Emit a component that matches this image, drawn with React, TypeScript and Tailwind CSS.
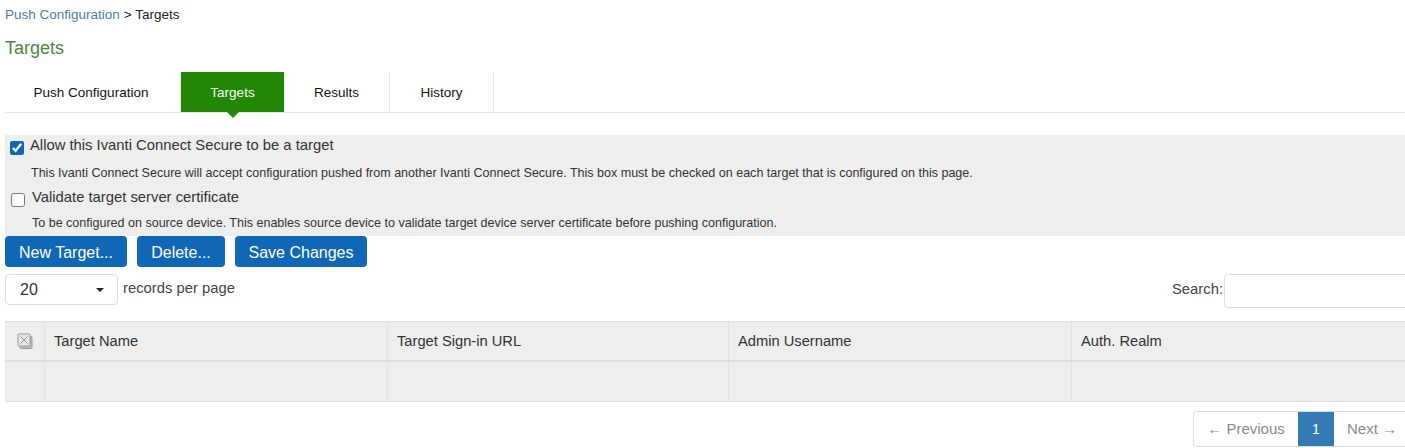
import { useState } from "react";

const tabs = [
  { label: "Push Configuration", width: "w-[176px] pr-[3px]", active: false },
  { label: "Targets", width: "w-[103px]", active: true },
  { label: "Results", width: "w-[106px]", active: false },
  { label: "History", width: "w-[104px]", active: false },
];

const columns = ["Target Name", "Target Sign-in URL", "Admin Username", "Auth. Realm"];

const gridCols = "grid grid-cols-[40px_343px_341px_343px_1fr]";

const SelectAllIcon = () => (
  <svg width="16" height="16" viewBox="0 0 16 16" fill="none">
    <rect x="3" y="3.5" width="12" height="12" rx="1" fill="#bdbdbd" stroke="#9a9a9a" />
    <rect x="1" y="1" width="12" height="12" rx="1" fill="#e6e6e6" stroke="#9a9a9a" />
    <path d="M3.5 3.5l7 7M10.5 3.5l-7 7" stroke="#9a9a9a" />
  </svg>
);

const App = () => {
  const [allow, setAllow] = useState(true);
  const [validate, setValidate] = useState(false);

  return (
    <div className="w-[1405px] h-[448px] overflow-hidden bg-white text-[13.5px] text-[#333] font-['Liberation_Sans',Arial,sans-serif]">
      {/* breadcrumb */}
      <div className="h-[29px] pl-[5px] pt-[1px] flex items-center">
        <span className="text-[#4a7fa8]">Push Configuration</span>
        <span className="ml-[4px] text-[#222]">&gt; Targets</span>
      </div>

      <h1 className="pl-[5px] h-[43px] pb-[5px] flex items-center text-[18px] text-[#4a8a3a]">Targets</h1>

      {/* tabs */}
      <div className="ml-[5px] h-[41px] flex border-b border-[#e5e5e5]">
        {tabs.map((tab) => (
          <div
            key={tab.label}
            className={
              tab.active
                ? `relative ${tab.width} h-[40px] pt-[2px] flex items-center justify-center bg-[#218704] text-white`
                : `${tab.width} h-[40px] pt-[2px] flex items-center justify-center text-[#111] border-r border-[#e8e8e8]`
            }
          >
            {tab.label}
            {tab.active && (
              <div className="absolute top-full left-1/2 -translate-x-1/2 border-x-[6px] border-t-[6px] border-x-transparent border-t-[#218704]" />
            )}
          </div>
        ))}
      </div>

      {/* options */}
      <div className="ml-[5px] mt-[22px] h-[101px] bg-[#eeeeee] text-[#333]">
        <div className="h-[26px] pl-[5px] flex items-center">
          <input
            type="checkbox"
            checked={allow}
            onChange={() => setAllow(!allow)}
            className="w-[14px] h-[14px] accent-[#0f67b5]"
          />
          <label className="ml-[6px] text-[14.8px] -mt-[6px]">Allow this Ivanti Connect Secure to be a target</label>
        </div>
        <p className="h-[26px] pl-[26px] pb-[2px] flex items-center text-[12.52px]">
          This Ivanti Connect Secure will accept configuration pushed from another Ivanti Connect Secure. This box must
          be checked on each target that is configured on this page.
        </p>
        <div className="h-[25px] pl-[6px] flex items-center">
          <input
            type="checkbox"
            checked={validate}
            onChange={() => setValidate(!validate)}
            className="w-[14px] h-[14px] mt-[1px] accent-[#0f67b5]"
          />
          <label className="ml-[7px] text-[14.8px] -mt-[4px]">Validate target server certificate</label>
        </div>
        <p className="h-[24px] pl-[27px] pb-[2px] flex items-center text-[12.52px]">
          To be configured on source device. This enables source device to validate target device server certificate
          before pushing configuration.
        </p>
      </div>

      {/* buttons */}
      <div className="ml-[5px] h-[31px] flex gap-[10px] text-[16px] text-white">
        <button className="w-[122px] pt-[2px] rounded-[4px] bg-[#0f67b5]">New Target...</button>
        <button className="w-[88px] pt-[2px] rounded-[4px] bg-[#0f67b5]">Delete...</button>
        <button className="w-[132px] pt-[2px] rounded-[4px] bg-[#0f67b5]">Save Changes</button>
      </div>

      {/* length + search */}
      <div className="mt-[7px] h-[31px] ml-[5px] flex items-center justify-between">
        <div className="flex items-center">
          <div className="w-[113px] h-[31px] pl-[14px] pr-[13px] flex items-center justify-between border border-[#ddd] rounded-[4px] text-[16px] text-[#333]">
            20
            <span className="border-x-[4px] border-t-[4px] border-x-transparent border-t-[#222]" />
          </div>
          <span className="ml-[5px] -mt-[3px] text-[14.8px] text-[#444]">records per page</span>
        </div>
        <div className="flex items-center text-[14.8px]">
          <span className="text-[#444] mr-[1px]">Search:</span>
          <input className="w-[200px] -mr-[19px] mt-[3px] h-[34px] border border-[#ddd] rounded-[4px] outline-none" />
        </div>
      </div>

      {/* table */}
      <div className="ml-[5px] mt-[16px] bg-[#eeeeee] border-y border-[#e0e0e0] text-[14.7px]">
        <div className={`${gridCols} h-[40px] border-b-2 border-[#dedede] text-[#333]`}>
          <div className="flex items-center justify-center border-r border-[#e2e2e2]">
            <SelectAllIcon />
          </div>
          {columns.map((col) => (
            <div key={col} className="flex items-center pl-[9px] first:pl-[10px] border-r border-[#e2e2e2] last:border-r-0">
              {col}
            </div>
          ))}
        </div>
        <div className={`${gridCols} h-[39px]`}>
          <div className="border-r border-[#e2e2e2]" />
          {columns.map((col) => (
            <div key={col} className="border-r border-[#e2e2e2] last:border-r-0" />
          ))}
        </div>
      </div>

      {/* pagination */}
      <div className="mt-[9px] flex justify-end">
        <div className="h-[36px] flex border border-[#ddd] border-r-0 rounded-l-[4px] text-[#8a8a8a] text-[15px]">
          <div className="w-[104px] flex items-center justify-center">← Previous</div>
          <div className="w-[36px] flex items-center justify-center bg-[#337ab7] text-white text-[14px]">1</div>
          <div className="w-[71px] pl-[13px] flex items-center">Next →</div>
        </div>
      </div>
    </div>
  );
};

export default App;
